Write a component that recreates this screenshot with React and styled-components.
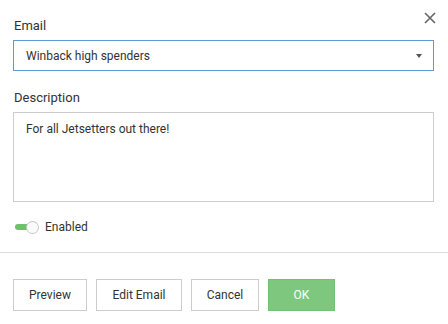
import React, { useState } from 'react';
import styled, { createGlobalStyle } from 'styled-components';

const Global = createGlobalStyle`
  html, body { margin: 0; padding: 0; background: #fff; }
  body { font-family: Roboto, "Liberation Sans", Arial, sans-serif; color: #333; }
  * { box-sizing: border-box; }
`;

const Dialog = styled.div`
  position: relative;
  width: 448px;
  height: 324px;
  background: #fff;
`;

const Close = styled.button`
  position: absolute;
  top: 12px;
  right: 12px;
  width: 12px;
  height: 12px;
  padding: 0;
  border: none;
  background: none;
  cursor: pointer;
  svg { display: block; }
`;

const Body = styled.div`
  padding: 18px 14px 0 13px;
  display: flex;
  flex-direction: column;
`;

const Label = styled.label`
  font-size: 13px;
  line-height: 16px;
  color: #333;
  padding-left: 1px;
  margin-bottom: 6px;
`;

const Select = styled.div`
  height: 31px;
  border: 1px solid #5b9bd9;
  display: flex;
  align-items: center;
  justify-content: space-between;
  padding: 0 11px 0 12px;
  font-size: 12px;
  color: #333;
  margin-bottom: 19px;
`;

const Caret = styled.span`
  width: 0;
  height: 0;
  border-left: 3.5px solid transparent;
  border-right: 3.5px solid transparent;
  border-top: 4px solid #555;
`;

const TextArea = styled.div`
  height: 90px;
  border: 1px solid #ccc;
  padding: 9px 12px;
  font-size: 12px;
  color: #333;
`;

const ToggleRow = styled.div`
  display: flex;
  align-items: center;
  gap: 7px;
  margin-top: 17px;
  height: 16px;
  font-size: 12px;
  color: #333;
`;

const Switch = styled.span`
  position: relative;
  width: 23px;
  height: 11px;
  margin-left: 2px;
  &::before {
    content: '';
    position: absolute;
    left: 0;
    top: 2.5px;
    width: 17px;
    height: 6px;
    border-radius: 3px;
    background: ${p => (p.$on ? '#6cc06e' : '#bbb')};
  }
  &::after {
    content: '';
    position: absolute;
    left: ${p => (p.$on ? '12px' : '0')};
    top: 0;
    width: 11px;
    height: 11px;
    border-radius: 50%;
    background: #fafafa;
    box-shadow: 0 0 0 1px #c8c8c8;
  }
`;

const Divider = styled.hr`
  margin: 17px 0 0;
  border: none;
  border-top: 1px solid #ddd;
`;

const Footer = styled.div`
  display: flex;
  gap: 9px;
  padding: 26px 13px 0;
`;

const Button = styled.button`
  height: 32px;
  width: ${p => p.$w}px;
  padding: 0;
  font-family: inherit;
  font-size: 12px;
  color: ${p => (p.$primary ? '#fff' : '#333')};
  background: ${p => (p.$primary ? '#7dc77f' : '#fff')};
  border: 1px solid ${p => (p.$primary ? '#74c176' : '#ccc')};
  cursor: pointer;
`;

export default function App() {
  const [on, setOn] = useState(true);
  return (
    <>
      <Global />
      <Dialog>
        <Close aria-label="Close">
          <svg width="12" height="12" viewBox="0 0 12 12">
            <path d="M1 1 L11 11 M11 1 L1 11" stroke="#666" strokeWidth="1.6" />
          </svg>
        </Close>
        <Body>
          <Label>Email</Label>
          <Select>
            <span>Winback high spenders</span>
            <Caret />
          </Select>
          <Label>Description</Label>
          <TextArea>For all Jetsetters out there!</TextArea>
          <ToggleRow onClick={() => setOn(!on)}>
            <Switch $on={on} />
            <span>Enabled</span>
          </ToggleRow>
        </Body>
        <Divider />
        <Footer>
          <Button $w={74}>Preview</Button>
          <Button $w={86}>Edit Email</Button>
          <Button $w={68}>Cancel</Button>
          <Button $primary $w={67}>OK</Button>
        </Footer>
      </Dialog>
    </>
  );
}
